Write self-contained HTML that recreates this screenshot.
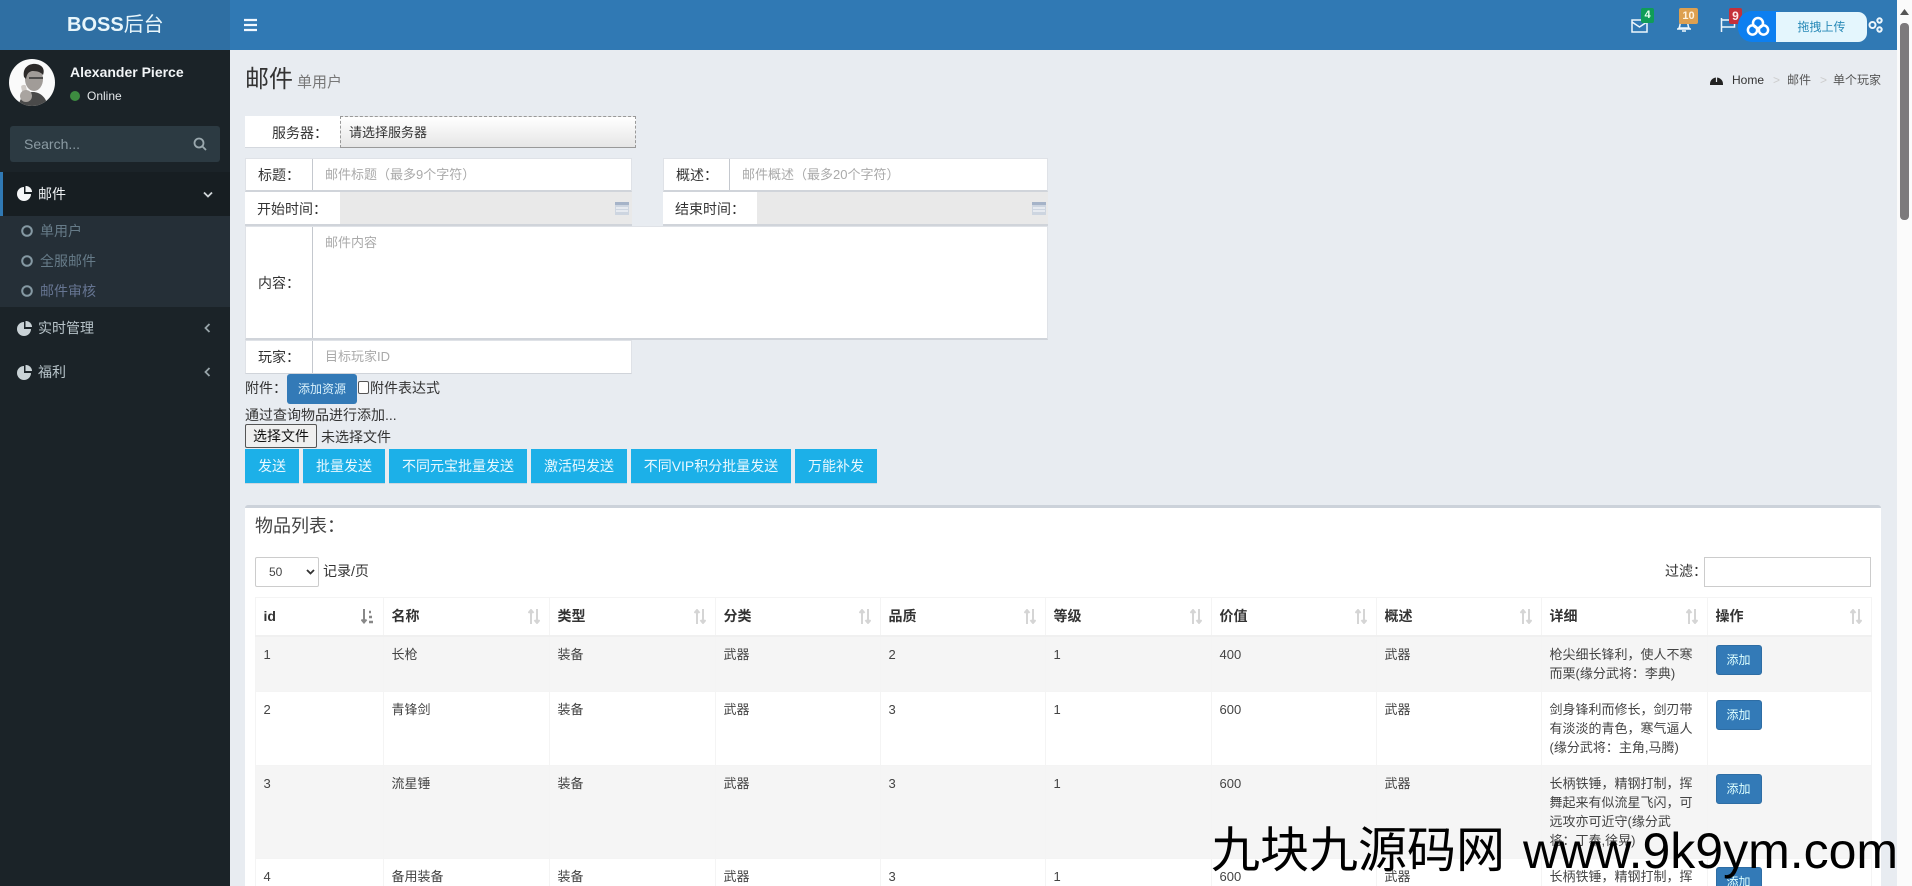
<!DOCTYPE html>
<html lang="zh"><head><meta charset="utf-8"><title>BOSS后台</title>
<style>
*{box-sizing:border-box}
html,body{margin:0;padding:0;width:1912px;height:886px;overflow:hidden;background:#e8ecf1}
#w{position:relative;width:1912px;height:886px;overflow:hidden;background:#e8ecf1;font-family:"Liberation Sans","Noto Sans CJK SC",sans-serif;color:#333;font-size:14px}
.a{position:absolute}
.t{position:absolute;white-space:nowrap}
.inp{position:absolute;background:#fff;border:1px solid #dfe2e7;border-bottom:2px solid #d0d4da}
.lb{position:absolute;top:0;bottom:0;border-right:1px solid #c4c8ce}
.ph{color:#aaa}
.btn{position:absolute;top:449px;height:34px;background:#1cb0e8;color:#e8f8ff;line-height:34px;text-align:center;font-size:14px;white-space:nowrap;box-shadow:0 1px 0 #cfd6de}
table{position:absolute;left:255px;top:597px;width:1616px;border-collapse:collapse;table-layout:fixed;font-size:13px;line-height:19px;background:#fff}
th{font-size:14px;font-weight:700;text-align:left;padding:8px 7px 9px 7.5px;height:38px;border:1px solid #f4f4f4;border-bottom:2px solid #f0f0f0;position:relative;line-height:20px;color:#333}
td{padding:8px 7px 8px 7.5px;vertical-align:top;border:1px solid #f4f4f4;color:#444}
tr.o td{background:#f5f5f5}
th svg{position:absolute;right:9px;top:11px}
.add{display:block;width:46px;height:30px;background:#337ab7;border:1px solid #2e6da4;border-radius:3px;color:#dff;font-size:12px;line-height:28px;text-align:center}
</style></head><body>
<div id="w">

<!-- header -->
<div class="a" style="left:0;top:0;width:1897px;height:50px;background:#3079b4"></div>
<div class="a" style="left:0;top:0;width:230px;height:50px;background:#2f6fa3"></div>
<div class="t" style="left:67px;top:10px;line-height:30px;font-size:20px;color:#e8f6fb"><b>BOSS</b>后台</div>
<svg class="a" style="left:244px;top:18px" width="14" height="14" viewBox="0 0 14 14"><path d="M0 2h13M0 7h13M0 12h13" stroke="#f0f8ff" stroke-width="2.2"/></svg>

<!-- top icons -->
<svg class="a" style="left:1631px;top:19px" width="17" height="14" viewBox="0 0 17 14" fill="none" stroke="#eef7fc" stroke-width="1.5"><path d="M1 1h15v12H1zM1 3l7.5 5L16 3"/></svg>
<div class="t" style="left:1641px;top:8px;width:13px;height:15px;background:#0f9d58;color:#e8fff0;font:700 11px/15px 'Liberation Sans';text-align:center;border-radius:2px">4</div>
<svg class="a" style="left:1676px;top:16px" width="16" height="16" viewBox="0 0 16 16" fill="none" stroke="#eef7fc" stroke-width="1.5"><path d="M3 12c2-3 0-9 5-9s3 6 5 9zM1 13h14M6 15h4"/></svg>
<div class="t" style="left:1679px;top:8px;width:19px;height:16px;background:#dda050;color:#fff3df;font:700 11px/16px 'Liberation Sans';text-align:center;border-radius:2px">10</div>
<svg class="a" style="left:1720px;top:18px" width="16" height="14" viewBox="0 0 16 14" fill="none" stroke="#eef7fc" stroke-width="1.5"><path d="M1.5 0v14M1.5 2h13v7h-13"/></svg>
<div class="t" style="left:1729px;top:8px;width:13px;height:16px;background:#c5303a;color:#ffeaea;font:700 12px/16px 'Liberation Sans';text-align:center;border-radius:2px">9</div>
<!-- upload widget -->
<div class="a" style="left:1738px;top:11px;width:42px;height:31px;background:#0d7ff0;border-radius:14px 0 0 14px"></div>
<svg class="a" style="left:1746px;top:16px" width="24" height="21" viewBox="0 0 24 21" fill="none" stroke="#fff" stroke-width="2.5"><circle cx="12" cy="7" r="5"/><circle cx="6.5" cy="14" r="4.6"/><circle cx="17.5" cy="14" r="4.6"/></svg>
<div class="t" style="left:1776px;top:12px;width:91px;height:30px;background:#e4f6fd;border-radius:0 9px 9px 0;color:#2a8bb8;font-size:12px;line-height:30px;text-align:center">拖拽上传</div>
<svg class="a" style="left:1868px;top:17px" width="15" height="16" viewBox="0 0 15 16" fill="none" stroke="#eef7fc" stroke-width="2"><circle cx="4.5" cy="8" r="3"/><circle cx="11.5" cy="3.5" r="2.2"/><circle cx="11.5" cy="12.5" r="2.2"/></svg>

<!-- sidebar -->
<div class="a" style="left:0;top:50px;width:230px;height:836px;background:#1b2328"></div>
<svg class="a" style="left:9px;top:59px" width="46" height="47" viewBox="0 0 46 47"><defs><clipPath id="c"><ellipse cx="23" cy="23.5" rx="23" ry="23.5"/></clipPath></defs><g clip-path="url(#c)"><rect width="46" height="47" fill="#fafafa"/><path d="M10 47c0-9 8-14 14-14s14 5 14 14z" fill="#4a4a4a"/><ellipse cx="25" cy="20" rx="9" ry="12" fill="#a19c98"/><path d="M15 18c-2-10 6-14 12-13 7 1 9 6 7 11-3-4-8-4-11-4-3 1-5 2-6 8z" fill="#2d2a29"/><path d="M20 19h14" stroke="#333" stroke-width="1.5"/><rect x="13" y="26" width="5" height="13" rx="2" fill="#cfcac6" transform="rotate(-12 15 32)"/><ellipse cx="17" cy="37" rx="6" ry="6" fill="#a9a4a0"/></g></svg>
<div class="t" style="left:70px;top:62px;font-weight:700;font-size:14px;line-height:20px;color:#f2f5f7">Alexander Pierce</div>
<div class="a" style="left:70px;top:91px;width:10px;height:10px;border-radius:50%;background:#3d8b40"></div>
<div class="t" style="left:87px;top:88px;font-size:12px;line-height:16px;color:#e4e8ea">Online</div>
<div class="a" style="left:10px;top:126px;width:210px;height:36px;background:#2c3a42;border-radius:3px"></div>
<div class="t" style="left:24px;top:134px;font-size:14px;line-height:20px;color:#8b9ba3">Search...</div>
<svg class="a" style="left:193px;top:137px" width="14" height="14" viewBox="0 0 14 14" fill="none" stroke="#9aa8ae" stroke-width="1.8"><circle cx="6" cy="6" r="4.5"/><path d="M9.5 9.5L13 13"/></svg>

<div class="a" style="left:0;top:172px;width:230px;height:44px;background:#171e22"></div>
<div class="a" style="left:0;top:172px;width:3px;height:44px;background:#3079b4"></div>
<svg class="a" style="left:17px;top:186px" width="16" height="15" viewBox="0 0 16 15" fill="#f4f6f7"><path d="M7 1A7 7 0 1 0 14 8H7z"/><path d="M8.5 0A6 6 0 0 1 15 6H8.5z"/></svg>
<div class="t" style="left:38px;top:184px;line-height:20px;color:#f0f3f5">邮件</div>
<svg class="a" style="left:203px;top:191px" width="10" height="7" viewBox="0 0 10 7" fill="none" stroke="#d0d6d9" stroke-width="1.8"><path d="M1 1.5L5 5.5l4-4"/></svg>

<div class="a" style="left:0;top:216px;width:230px;height:91px;background:#252f37"></div>
<svg class="a" style="left:21px;top:225px" width="12" height="12" fill="none" stroke="#8599a3" stroke-width="2"><circle cx="6" cy="6" r="4.8"/></svg>
<div class="t" style="left:40px;top:221px;line-height:20px;color:#667b88">单用户</div>
<svg class="a" style="left:21px;top:255px" width="12" height="12" fill="none" stroke="#8599a3" stroke-width="2"><circle cx="6" cy="6" r="4.8"/></svg>
<div class="t" style="left:40px;top:251px;line-height:20px;color:#667b88">全服邮件</div>
<svg class="a" style="left:21px;top:285px" width="12" height="12" fill="none" stroke="#8599a3" stroke-width="2"><circle cx="6" cy="6" r="4.8"/></svg>
<div class="t" style="left:40px;top:281px;line-height:20px;color:#667592">邮件审核</div>

<svg class="a" style="left:17px;top:321px" width="16" height="15" viewBox="0 0 16 15" fill="#c9d2d6"><path d="M7 1A7 7 0 1 0 14 8H7z"/><path d="M8.5 0A6 6 0 0 1 15 6H8.5z"/></svg>
<div class="t" style="left:38px;top:318px;line-height:20px;color:#b8c4ca">实时管理</div>
<svg class="a" style="left:204px;top:323px" width="7" height="10" viewBox="0 0 7 10" fill="none" stroke="#98a4a9" stroke-width="1.8"><path d="M5.5 1L1.5 5l4 4"/></svg>
<svg class="a" style="left:17px;top:365px" width="16" height="15" viewBox="0 0 16 15" fill="#c9d2d6"><path d="M7 1A7 7 0 1 0 14 8H7z"/><path d="M8.5 0A6 6 0 0 1 15 6H8.5z"/></svg>
<div class="t" style="left:38px;top:362px;line-height:20px;color:#b8c4ca">福利</div>
<svg class="a" style="left:204px;top:367px" width="7" height="10" viewBox="0 0 7 10" fill="none" stroke="#98a4a9" stroke-width="1.8"><path d="M5.5 1L1.5 5l4 4"/></svg>

<!-- content header -->
<div class="t" style="left:245px;top:63px;font-size:24px;line-height:34px;color:#333">邮件</div>
<div class="t" style="left:297px;top:72px;font-size:15px;line-height:22px;color:#777">单用户</div>
<svg class="a" style="left:1710px;top:74px" width="13" height="11" viewBox="0 0 13 11" fill="#222"><path d="M0 10a6.5 6.5 0 1 1 13 0v1H0z"/><path d="M6.5 3v5" stroke="#e8ecf1" stroke-width="1.2"/></svg>
<div class="t" style="left:1732px;top:71px;font-size:12px;line-height:18px;color:#333">Home</div>
<div class="t" style="left:1773px;top:71px;font-size:12px;line-height:18px;color:#ccc">&gt;</div>
<div class="t" style="left:1787px;top:71px;font-size:12px;line-height:18px;color:#555">邮件</div>
<div class="t" style="left:1820px;top:71px;font-size:12px;line-height:18px;color:#ccc">&gt;</div>
<div class="t" style="left:1833px;top:71px;font-size:12px;line-height:18px;color:#555">单个玩家</div>

<!-- form -->
<div class="a" style="left:245px;top:116px;width:95px;height:32px;background:#fff;border-bottom:1px solid #d4d8de"></div>
<div class="t" style="left:272px;top:123px;line-height:20px">服务器&#65306;</div>
<div class="a" style="left:340px;top:116px;width:296px;height:32px;background:linear-gradient(#fff,#e6e6e6);border:1px dashed #999;border-bottom:1px solid #999"></div>
<div class="t" style="left:349px;top:123px;font-size:13px;line-height:20px;color:#333">请选择服务器</div>

<div class="inp" style="left:245px;top:158px;width:387px;height:34px"><div class="lb" style="left:0;width:67px"></div></div>
<div class="t" style="left:258px;top:165px;line-height:20px">标题&#65306;</div>
<div class="t ph" style="left:325px;top:165px;font-size:13px;line-height:20px">邮件标题&#65288;最多9个字符&#65289;</div>

<div class="a" style="left:245px;top:192px;width:95px;height:34px;background:#fff;border-bottom:2px solid #d0d4da"></div>
<div class="a" style="left:340px;top:192px;width:292px;height:34px;background:#e9e9e9;border-bottom:2px solid #d0d4da"></div>
<div class="t" style="left:257px;top:199px;line-height:20px">开始时间&#65306;</div>
<svg class="a" style="left:615px;top:202px" width="14" height="13" viewBox="0 0 14 13"><rect width="14" height="13" fill="#cdd5e0"/><rect width="14" height="3" fill="#a5b3c8"/><path d="M1 6h12M1 9h12" stroke="#fff"/></svg>

<div class="inp" style="left:663px;top:158px;width:385px;height:34px"><div class="lb" style="left:0;width:66px"></div></div>
<div class="t" style="left:676px;top:165px;line-height:20px">概述&#65306;</div>
<div class="t ph" style="left:742px;top:165px;font-size:13px;line-height:20px">邮件概述&#65288;最多20个字符&#65289;</div>

<div class="a" style="left:663px;top:192px;width:94px;height:34px;background:#fff;border-bottom:2px solid #d0d4da"></div>
<div class="a" style="left:757px;top:192px;width:291px;height:34px;background:#e9e9e9;border-bottom:2px solid #d0d4da"></div>
<div class="t" style="left:675px;top:199px;line-height:20px">结束时间&#65306;</div>
<svg class="a" style="left:1032px;top:202px" width="14" height="13" viewBox="0 0 14 13"><rect width="14" height="13" fill="#cdd5e0"/><rect width="14" height="3" fill="#a5b3c8"/><path d="M1 6h12M1 9h12" stroke="#fff"/></svg>

<div class="inp" style="left:245px;top:226px;width:803px;height:114px"><div class="lb" style="left:0;width:67px"></div></div>
<div class="t" style="left:258px;top:273px;line-height:20px">内容&#65306;</div>
<div class="t ph" style="left:325px;top:233px;font-size:13px;line-height:20px">邮件内容</div>

<div class="inp" style="left:245px;top:340px;width:387px;height:34px;border-bottom-width:1px"><div class="lb" style="left:0;width:67px"></div></div>
<div class="t" style="left:258px;top:347px;line-height:20px">玩家&#65306;</div>
<div class="t ph" style="left:325px;top:347px;font-size:13px;line-height:20px">目标玩家ID</div>

<div class="t" style="left:245px;top:378px;line-height:20px">附件&#65306;</div>
<div class="t" style="left:287px;top:374px;width:70px;height:30px;background:#337ab7;border-radius:3px;color:#d8f0fa;font-size:12px;line-height:30px;text-align:center">添加资源</div>
<div class="a" style="left:358px;top:381px;width:11px;height:13px;background:#fff;border:1px solid #555;border-radius:2px"></div>
<div class="t" style="left:370px;top:378px;line-height:20px">附件表达式</div>
<div class="t" style="left:245px;top:405px;line-height:20px">通过查询物品进行添加...</div>
<div class="t" style="left:245px;top:424px;width:72px;height:24px;background:#efefef;border:1px solid #555;border-radius:2px;line-height:22px;text-align:center;color:#111">选择文件</div>
<div class="t" style="left:321px;top:427px;line-height:20px">未选择文件</div>

<div class="btn" style="left:245px;width:54px">发送</div>
<div class="btn" style="left:303px;width:82px">批量发送</div>
<div class="btn" style="left:389px;width:138px">不同元宝批量发送</div>
<div class="btn" style="left:531px;width:96px">激活码发送</div>
<div class="btn" style="left:631px;width:160px">不同VIP积分批量发送</div>
<div class="btn" style="left:795px;width:82px">万能补发</div>

<!-- box -->
<div class="a" style="left:245px;top:505px;width:1636px;height:381px;background:#fff;border-top:3px solid #ccd2da;border-radius:3px 3px 0 0"></div>
<div class="t" style="left:255px;top:513px;font-size:18px;line-height:26px;color:#444">物品列表&#65306;</div>
<div class="a" style="left:255px;top:557px;width:64px;height:30px;background:#fff;border:1px solid #ccc;border-radius:2px"></div>
<div class="t" style="left:269px;top:563px;font-size:12px;line-height:18px;color:#444">50</div>
<svg class="a" style="left:306px;top:569px" width="9" height="6" viewBox="0 0 9 6" fill="none" stroke="#333" stroke-width="1.8"><path d="M1 1l3.5 3.5L8 1"/></svg>
<div class="t" style="left:323px;top:561px;font-size:14px;line-height:20px;color:#333">记录/页</div>
<div class="t" style="left:1665px;top:561px;font-size:14px;line-height:20px;color:#333">过滤&#65306;</div>
<div class="a" style="left:1704px;top:557px;width:167px;height:30px;background:#fff;border:1px solid #ccc"></div>

<table>
<colgroup><col style="width:128px"><col style="width:166px"><col style="width:166px"><col style="width:165px"><col style="width:165px"><col style="width:166px"><col style="width:165px"><col style="width:165px"><col style="width:166px"><col style="width:164px"></colgroup>
<thead><tr>
<th>id<svg width="13" height="15" viewBox="0 0 13 15" fill="none" stroke="#888" stroke-width="2"><path d="M3 0v13M.5 10.5L3 13.5l2.5-3"/><path d="M8 3h2M8 8h3M8 13h4" stroke-width="2.5"/></svg></th>
<th>名称<svg width="12" height="15" viewBox="0 0 12 15" fill="none" stroke="#d5d5d5" stroke-width="2"><path d="M3 15V1M.5 4L3 1l2.5 3M9 0v14M6.5 11L9 14l2.5-3"/></svg></th>
<th>类型<svg width="12" height="15" viewBox="0 0 12 15" fill="none" stroke="#d5d5d5" stroke-width="2"><path d="M3 15V1M.5 4L3 1l2.5 3M9 0v14M6.5 11L9 14l2.5-3"/></svg></th>
<th>分类<svg width="12" height="15" viewBox="0 0 12 15" fill="none" stroke="#d5d5d5" stroke-width="2"><path d="M3 15V1M.5 4L3 1l2.5 3M9 0v14M6.5 11L9 14l2.5-3"/></svg></th>
<th>品质<svg width="12" height="15" viewBox="0 0 12 15" fill="none" stroke="#d5d5d5" stroke-width="2"><path d="M3 15V1M.5 4L3 1l2.5 3M9 0v14M6.5 11L9 14l2.5-3"/></svg></th>
<th>等级<svg width="12" height="15" viewBox="0 0 12 15" fill="none" stroke="#d5d5d5" stroke-width="2"><path d="M3 15V1M.5 4L3 1l2.5 3M9 0v14M6.5 11L9 14l2.5-3"/></svg></th>
<th>价值<svg width="12" height="15" viewBox="0 0 12 15" fill="none" stroke="#d5d5d5" stroke-width="2"><path d="M3 15V1M.5 4L3 1l2.5 3M9 0v14M6.5 11L9 14l2.5-3"/></svg></th>
<th>概述<svg width="12" height="15" viewBox="0 0 12 15" fill="none" stroke="#d5d5d5" stroke-width="2"><path d="M3 15V1M.5 4L3 1l2.5 3M9 0v14M6.5 11L9 14l2.5-3"/></svg></th>
<th>详细<svg width="12" height="15" viewBox="0 0 12 15" fill="none" stroke="#d5d5d5" stroke-width="2"><path d="M3 15V1M.5 4L3 1l2.5 3M9 0v14M6.5 11L9 14l2.5-3"/></svg></th>
<th>操作<svg width="12" height="15" viewBox="0 0 12 15" fill="none" stroke="#d5d5d5" stroke-width="2"><path d="M3 15V1M.5 4L3 1l2.5 3M9 0v14M6.5 11L9 14l2.5-3"/></svg></th>
</tr></thead>
<tbody>
<tr class="o"><td>1</td><td>长枪</td><td>装备</td><td>武器</td><td>2</td><td>1</td><td>400</td><td>武器</td><td style="white-space:nowrap">枪尖细长锋利&#65292;使人不寒<br>而栗(缘分武将&#65306;李典)</td><td><span class="add">添加</span></td></tr>
<tr><td>2</td><td>青锋剑</td><td>装备</td><td>武器</td><td>3</td><td>1</td><td>600</td><td>武器</td><td style="white-space:nowrap">剑身锋利而修长&#65292;剑刃带<br>有淡淡的青色&#65292;寒气逼人<br>(缘分武将&#65306;主角,马腾)</td><td><span class="add">添加</span></td></tr>
<tr class="o"><td>3</td><td>流星锤</td><td>装备</td><td>武器</td><td>3</td><td>1</td><td>600</td><td>武器</td><td style="white-space:nowrap">长柄铁锤&#65292;精钢打制&#65292;挥<br>舞起来有似流星飞闪&#65292;可<br>远攻亦可近守(缘分武<br>将&#65306;丁奉,徐晃)</td><td><span class="add">添加</span></td></tr>
<tr><td>4</td><td>备用装备</td><td>装备</td><td>武器</td><td>3</td><td>1</td><td>600</td><td>武器</td><td style="white-space:nowrap">长柄铁锤&#65292;精钢打制&#65292;挥</td><td><span class="add">添加</span></td></tr>
</tbody></table>

<!-- scrollbar -->
<div class="a" style="left:1897px;top:0;width:15px;height:886px;background:#fbfbfb"></div>
<svg class="a" style="left:1900px;top:9px" width="9" height="6" viewBox="0 0 9 6"><path d="M4.5 0L9 6H0z" fill="#555"/></svg>
<div class="a" style="left:1900px;top:23px;width:9px;height:197px;background:#7d7a7c;border-radius:4px"></div>

<!-- watermark -->
<div class="t" style="left:1211px;top:819px;font-size:49px;line-height:64px;color:#000">九块九源码网</div>
<div class="t" style="left:1523px;top:819px;font-size:50px;line-height:64px;color:#000;font-family:'Liberation Sans',sans-serif">www.9k9ym.com</div>
</div>
</body></html>
